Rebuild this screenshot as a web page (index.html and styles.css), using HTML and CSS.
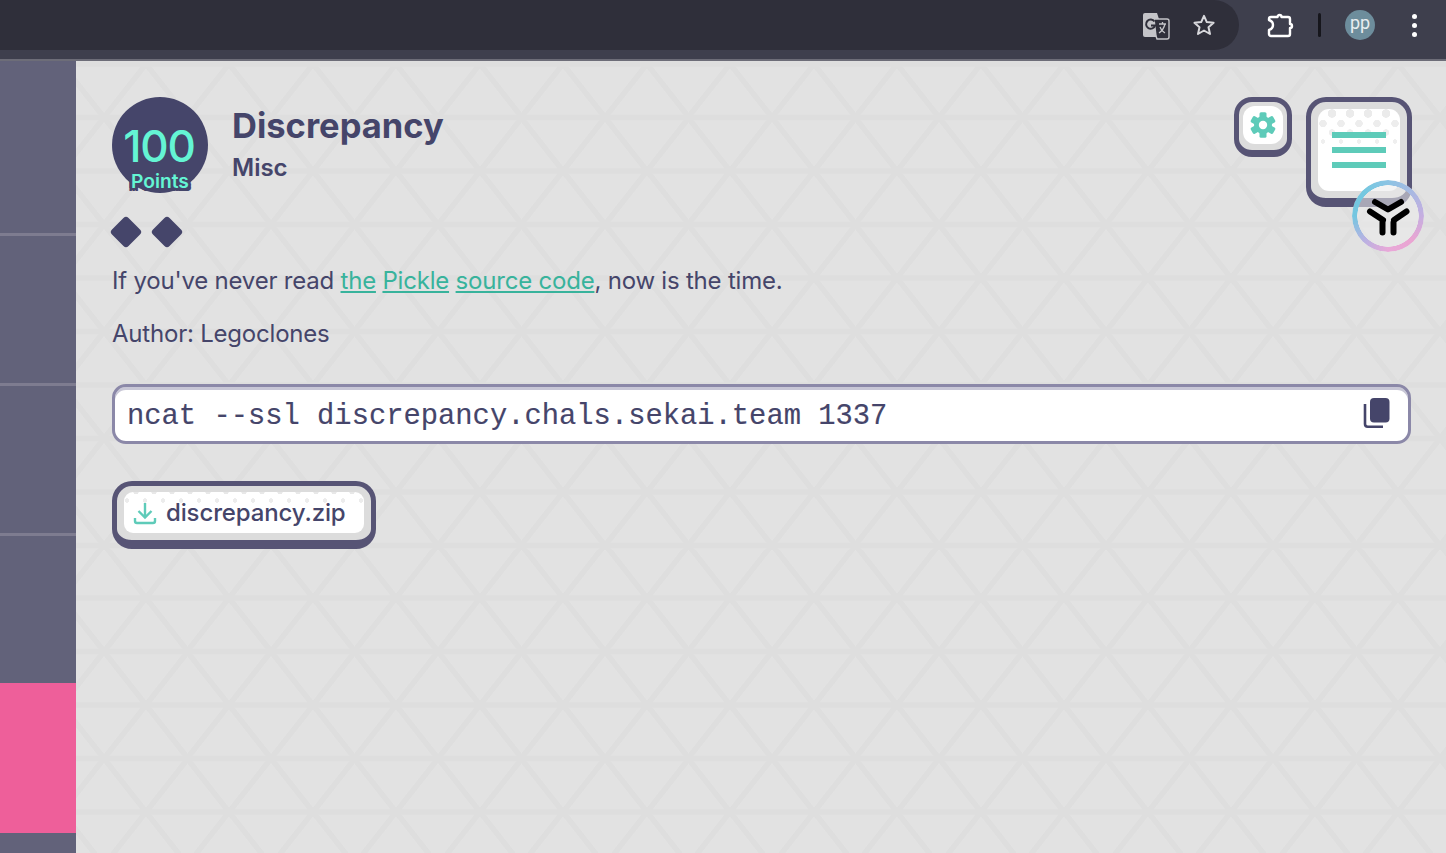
FILE: index.html
```html
<!DOCTYPE html>
<html>
<head>
  <title>Discrepancy</title>
  <meta charset="UTF-8">
  <link rel="stylesheet" href="styles.css">
</head>
<body>
  <header class="toolbar">
    <div class="omnibox">
      <svg class="ic_translate" width="28" height="28" viewBox="0 0 28 28">
        <path d="M3 1h12l8 24H3a2 2 0 0 1-2-2V3a2 2 0 0 1 2-2z" fill="#c4c4c8"/>
        <path d="M12 7h13a2 2 0 0 1 2 2v16a2 2 0 0 1-2 2H15l-1-3z" fill="#2f2f3a" stroke="#c4c4c8" stroke-width="1.4"/>
        <path d="M17 12h7M20.5 10v2M23 12c-1 4-3 7-6 9M18 15c1 3 3 5 5 6" fill="none" stroke="#c4c4c8" stroke-width="1.3"/>
        <path d="M12.5 9.5a4.6 4.6 0 1 0 .6 4H9" fill="none" stroke="#2f2f3a" stroke-width="2"/>
      </svg>
      <svg class="ic_star" width="24" height="24" viewBox="0 0 24 24">
        <path d="M12 2.800l2.800 6.300 6.800.7-5.100 4.500 1.500 6.700-6-3.500-6 3.500 1.500-6.700-5.100-4.500 6.800-.7z" fill="none" stroke="#d8d8dc" stroke-width="2" stroke-linejoin="round"/>
      </svg>
    </div>
    <div class="tb_right">
      <svg class="ic_ext" width="28" height="28" viewBox="0 0 28 28">
        <path d="M5 6h6.500a2 2 0 0 1 4 0H22a2 2 0 0 1 2 2v5a2 2 0 0 1 0 4v6a2 2 0 0 1-2 2H5a2 2 0 0 1-2-2v-4c3-1 4-3 4-5s-1-4-4-5V8a2 2 0 0 1 2-2z" fill="none" stroke="#fff" stroke-width="2.400" stroke-linejoin="round"/>
      </svg>
      <div class="tb_sep"></div>
      <div class="avatar">pp</div>
      <div class="kebab"><i></i><i></i><i></i></div>
    </div>
  </header>

  <div class="page">
    <nav class="sidebar">
      <div class="tab tab_first"></div>
      <div class="tab"></div>
      <div class="tab"></div>
      <div class="tab tab_plain"></div>
      <div class="tab tab_active"></div>
      <div class="tab_last"></div>
    </nav>

    <main class="content">
      <div class="head">
        <div class="points">
          <span class="points_num">100</span>
          <span class="points_lbl">Points</span>
        </div>
        <div class="titles">
          <h1>Discrepancy</h1>
          <h2>Misc</h2>
        </div>
        <div class="head_btns">
          <button class="btn btn_gear">
            <span class="gear_inner">
              <svg width="26" height="26" viewBox="-13 -13 26 26">
                <g fill="#5ecbb9">
                  <rect x="-3.500" y="-12.800" width="7" height="25.600" rx="1.500"/>
                  <rect x="-3.500" y="-12.800" width="7" height="25.600" rx="1.500" transform="rotate(60)"/>
                  <rect x="-3.500" y="-12.800" width="7" height="25.600" rx="1.500" transform="rotate(120)"/>
                  <circle r="9"/>
                </g>
                <circle r="4.200" fill="#fff"/>
              </svg>
            </span>
          </button>
          <button class="btn btn_menu">
            <span class="menu_inner"><i></i><i></i><i></i></span>
          </button>
        </div>
      </div>

      <div class="diamonds"><i></i><i></i></div>

      <p class="desc">If you've never read <a href="#">the</a> <a href="#">Pickle</a> <a href="#">source code</a>, now is the time.</p>
      <p class="desc">Author: Legoclones</p>

      <div class="cmd">
        <code>ncat --ssl discrepancy.chals.sekai.team 1337</code>
        <svg width="30" height="32" viewBox="0 0 30 32">
          <rect x="8" y="0" width="19.500" height="24.500" rx="4" fill="#45456a"/>
          <path d="M3 6v20a2.700 2.700 0 0 0 2.700 2.700H21" fill="none" stroke="#45456a" stroke-width="2.600"/>
        </svg>
      </div>

      <a class="btn btn_file" href="#">
        <span class="file_inner">
          <svg width="24" height="24" viewBox="0 0 24 24"><path d="M12 2v14M5.500 10l6.500 6.500 6.500-6.500M2 17v3a2 2 0 0 0 2 2h16a2 2 0 0 0 2-2v-3" fill="none" stroke="#5ecbb9" stroke-width="2.400"/></svg>
          discrepancy.zip
        </span>
      </a>
    </main>
  </div>

  <div class="assist">
    <svg width="62" height="62" viewBox="7 7 62 62">
      <g fill="none" stroke="#000" stroke-width="6" stroke-linecap="round" stroke-linejoin="round">
        <path d="M25 24l13 7.500 13-7.500"/>
        <path d="M20 33.500l13 8.500M56.500 33.500L44 42"/>
        <path d="M32.500 44.500v10M43.500 44.500v10"/>
      </g>
    </svg>
  </div>
</body>
</html>
```

FILE: styles.css
```css
* { box-sizing: border-box; }
html, body { margin: 0; height: 100%; }
body {
  position: relative;
  height: 853px;
  overflow: hidden;
  font-family: Inter, "Liberation Sans", sans-serif;
  color: #45456a;
}

/* browser bar */
.toolbar {
  height: 61px;
  display: flex;
  background: #3e3f4d;
  border-bottom: 2px solid #6d6d78;
}
.omnibox {
  width: 1239px;
  height: 50px;
  background: #2f2f3a;
  border-radius: 0 25px 25px 0;
  display: flex;
  align-items: center;
  justify-content: flex-end;
  gap: 22px;
  padding: 0 23px 0 0;
}
.ic_translate { margin-top: 1px; }
.tb_right {
  flex: 1;
  height: 50px;
  display: flex;
  align-items: center;
  padding-left: 27px;
}
.tb_sep { width: 3px; height: 24px; background: #16161c; border-radius: 2px; margin-left: 24px; }
.avatar {
  width: 30px; height: 30px;
  border-radius: 50%;
  background: #6d8d9c;
  color: #e8eef0;
  font: 18px "Roboto", sans-serif;
  text-align: center;
  line-height: 25px;
  margin-left: 24px;
}
.kebab { margin-left: 37px; display: flex; flex-direction: column; gap: 4px; }
.kebab i { width: 5px; height: 5px; border-radius: 50%; background: #fff; display: block; }

/* page */
.page { display: flex; height: 792px; }
.sidebar { width: 76px; background: #62627a; display: flex; flex-direction: column; flex-shrink: 0; }
.tab { height: 150px; border-bottom: 3px solid #7e7c90; }
.tab_first { height: 175px; }
.tab_plain { height: 147px; border: 0; }
.tab_active { background: #ee5f9a; border: 0; }
.tab_last { flex: 1; }

.content {
  flex: 1;
  padding: 36px 35px 0 36px;
  background-color: #e2e2e2;
  background-image: url("data:image/svg+xml,%3Csvg xmlns='http://www.w3.org/2000/svg' width='83.5' height='106.9'%3E%3Cg stroke='%23dedede' stroke-width='5.500' fill='none'%3E%3Cpath d='M0 3h83.500M0 56.450h83.500'/%3E%3Cpath d='M83.500 -50.450L-41.750 109.900M167 -50.450L41.750 109.900M0 -50.450L125.250 109.900M-83.500 -50.450L41.750 109.900'/%3E%3C/g%3E%3C/svg%3E");
  background-position: 28px 0;
}

.head { display: flex; align-items: flex-start; height: 120px; position: relative; }
.points {
  width: 96px; height: 96px;
  border-radius: 50%;
  background: #45456a;
  color: #64f5d4;
  text-align: center;
  position: relative;
  flex-shrink: 0;
}
.points_num { display: block; font-size: 44px; font-weight: 500; letter-spacing: -1.200px; line-height: 40px; padding: 29px 2px 0 0; }
.points_lbl {
  position: absolute;
  left: 19px; top: 75px;
  font-size: 19.200px; font-weight: 600;
  line-height: 18px;
  text-shadow: -3px 0 0 #45456a, 3px 0 0 #45456a, 0 3px 0 #45456a, -2px 2px 0 #45456a, 2px 2px 0 #45456a, 3px 3px 0 #45456a, -3px 3px 0 #45456a;
}
.titles { margin-left: 24px; }
h1 { margin: 7px 0 0; font-size: 34.500px; font-weight: 700; line-height: 44px; }
h2 { margin: 5px 0 0; font-size: 24px; font-weight: 600; line-height: 30px; }

.head_btns { margin-left: auto; margin-right: -1px; display: flex; gap: 14px; align-items: flex-start; }
.btn {
  display: block;
  padding: 0;
  border: 5px solid #575475;
  background: #dcdcdc;
  text-decoration: none;
  color: inherit;
}
.btn_gear { width: 58px; height: 60px; border-bottom-width: 7px; border-radius: 18px; padding: 4px 4px 6px; }
.gear_inner { display: flex; align-items: center; justify-content: center; height: 38px; background: #fff; border-radius: 12px; }
.btn_menu { width: 106px; height: 110px; border-bottom-width: 9px; border-radius: 20px; padding: 7px; }
.menu_inner {
  display: flex;
  flex-direction: column;
  gap: 9px;
  align-items: center;
  height: 82px;
  padding-top: 23px;
  border-radius: 11px;
  background:
    radial-gradient(circle, #ebebeb 4px, transparent 4.500px) 5px 0 / 18px 9px repeat-x,
    radial-gradient(circle, #ededed 3.500px, transparent 4px) -4px 10px / 18px 9px repeat-x,
    radial-gradient(circle, #eeeeee 3px, transparent 3.500px) 5px 19px / 18px 9px repeat-x,
    radial-gradient(circle, #efefef 2px, transparent 2.500px) -4px 28px / 18px 9px repeat-x,
    #fff;
}
.menu_inner i { display: block; width: 54px; height: 6px; background: #5ecbb9; }

.diamonds { display: flex; gap: 14.500px; padding-left: 1px; margin-top: 2px; height: 26px; }
.diamonds i { display: block; width: 26px; height: 26px; background: #45456a; border-radius: 4px; transform: rotate(45deg) scale(.9); }

.desc { margin: 0; font-size: 24px; line-height: 30px; letter-spacing: -.21px; }
.diamonds + .desc { margin-top: 21px; }
.desc + .desc { margin-top: 23px; }
.desc a { color: #38b39c; }

.cmd {
  margin-top: 35px;
  height: 60px;
  background: #fff;
  border: 3px solid #8b88a8;
  border-radius: 14px;
  display: flex;
  align-items: center;
  justify-content: space-between;
  padding: 0 16px 0 12px;
  box-shadow: inset 0 3px 0 #c8c7d6;
}
.cmd code { font-family: "Liberation Mono", monospace; font-size: 28.800px; color: #45456a; padding-top: 4px; -webkit-text-stroke: .15px #45456a; }

.btn_file {
  margin-top: 37px;
  width: 264px;
  height: 68px;
  border-bottom-width: 9px;
  border-radius: 20px;
  padding: 6px 7px;
}
.file_inner {
  display: flex;
  align-items: center;
  gap: 9px;
  height: 41px;
  padding-left: 9px;
  border-radius: 9px;
  font-size: 24px;
  font-weight: 500;
  letter-spacing: -.13px;
  background:
    radial-gradient(circle, #e8e8e8 2.500px, transparent 3px) 3px -5px / 18px 9px repeat-x,
    radial-gradient(circle, #ececec 2px, transparent 2.500px) -6px 4px / 18px 9px repeat-x,
    #fff;
}

/* floating helper badge */
.assist {
  position: absolute;
  left: 1352px; top: 180px;
  width: 72px; height: 72px;
  border-radius: 50%;
  padding: 5px;
  background: rgba(235, 235, 235, .55);
}
.assist::before {
  content: "";
  position: absolute;
  inset: 0;
  border-radius: 50%;
  background: conic-gradient(#8cc4e4, #c5aee0 90deg, #eaa5d2 135deg, #e8a8d8 180deg, #b8b2e2 225deg, #74c6e0 270deg, #74c8e0 315deg, #8cc4e4);
  -webkit-mask: radial-gradient(circle, transparent 30.500px, #000 31px);
  mask: radial-gradient(circle, transparent 30.500px, #000 31px);
}
.assist svg { display: block; }
```
